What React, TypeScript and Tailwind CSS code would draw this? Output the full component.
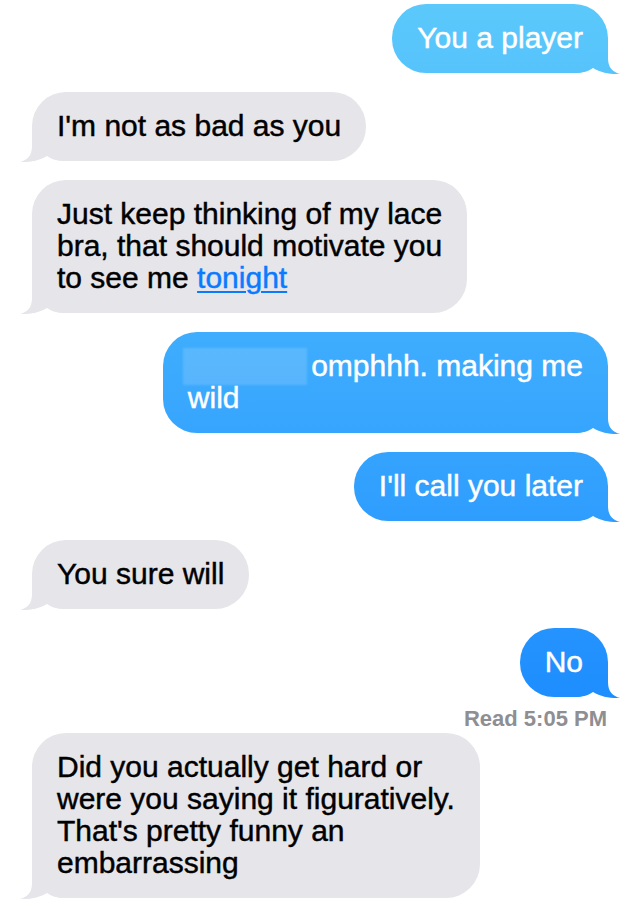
import React from 'react';

type Side = 'sent' | 'received';

interface BubbleProps {
  side: Side;
  className?: string;
  children: React.ReactNode;
}

// iOS 7 bubbles: sent ones share one gradient fixed to the screen, so colour depends on height
const sentBg = 'bg-fixed bg-linear-to-b from-[#5cc9fb] to-[#087afe] text-white';
const receivedBg = 'bg-[#e5e5ea] text-black';

const Tail: React.FC<{ side: Side }> = ({ side }) =>
  side === 'sent' ? (
    <span
      className={`absolute right-[-12px] bottom-[-1px] block w-[46px] h-[36px] ${sentBg} [clip-path:path('M0,0_L34,0_L34,20_C34,30_39,34_46,36_C37,36.5_27,35_19,30_C15,33_9,35_0,35_Z')]`}
    />
  ) : (
    <span
      className={`absolute left-[-12px] bottom-[-1px] block w-[46px] h-[36px] ${receivedBg} [clip-path:path('M46,0_L12,0_L12,20_C12,30_7,34_0,36_C9,36.5_19,35_27,30_C31,33_37,35_46,35_Z')]`}
    />
  );

const Bubble: React.FC<BubbleProps> = ({ side, className = '', children }) => (
  <div
    className={`relative w-fit rounded-[34px] px-[25px] pt-[18px] pb-[19px] text-[30px] leading-[32px] [-webkit-text-stroke:0.45px] ${
      side === 'sent' ? `self-end ${sentBg}` : `self-start ${receivedBg}`
    } ${className}`}
  >
    <Tail side={side} />
    <p className="relative whitespace-nowrap">{children}</p>
  </div>
);

export default function App() {
  return (
    <div className="min-h-[904px] bg-white px-[32px] pt-[4px] pb-4 flex flex-col font-['Liberation_Sans',Arial,sans-serif] antialiased">
      <Bubble side="sent">You a player</Bubble>

      <Bubble side="received" className="mt-[19px]">
        I'm not as bad as you
      </Bubble>

      <Bubble side="received" className="mt-[19px]">
        Just keep thinking of my lace
        <br />
        bra, that should motivate you
        <br />
        to see me <span className="text-[#0a7bfe] underline underline-offset-[3px] decoration-[2px]">tonight</span>
      </Bubble>

      <Bubble side="sent" className="mt-[19px]">
        <span className="inline-block align-top w-[124px] h-[32px] -ml-[5px] -mr-[4px]">
          <span className="block -mt-[2px] h-[37px] bg-white/15 blur-[1px]" />
        </span>{' '}
        omphhh. making me
        <br />
        wild
      </Bubble>

      <Bubble side="sent" className="mt-[19px]">
        I'll call you later
      </Bubble>

      <Bubble side="received" className="mt-[19px]">
        You sure will
      </Bubble>

      <Bubble side="sent" className="mt-[19px]">
        No
      </Bubble>
      <div className="self-end mt-[10px] pr-px text-[22px] leading-[24px] font-bold text-[#8e8e93]">
        Read 5:05 PM
      </div>

      <Bubble side="received" className="mt-[2px]">
        Did you actually get hard or
        <br />
        were you saying it figuratively.
        <br />
        That's pretty funny an
        <br />
        embarrassing
      </Bubble>
    </div>
  );
}
